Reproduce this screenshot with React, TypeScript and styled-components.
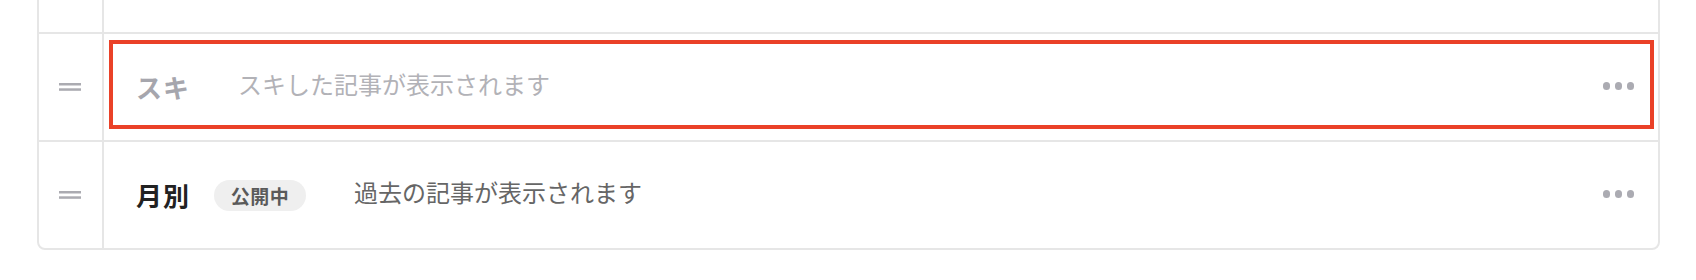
import styled, { createGlobalStyle } from "styled-components";

const GlobalStyle = createGlobalStyle`
  html, body {
    margin: 0;
    padding: 0;
    background: #ffffff;
  }
  body {
    font-family: "Noto Sans CJK JP", "Noto Sans", sans-serif;
  }
`;

type Item = {
  title: string;
  description: string;
  badge?: string;
  disabled?: boolean;
  highlighted?: boolean;
};

const items: Item[] = [
  {
    title: "スキ",
    description: "スキした記事が表示されます",
    disabled: true,
    highlighted: true,
  },
  {
    title: "月別",
    description: "過去の記事が表示されます",
    badge: "公開中",
  },
];

const DragHandle = () => (
  <svg width="22" height="8" viewBox="0 0 22 8" aria-hidden="true">
    <rect x="0" y="0" width="22" height="2.5" fill="#ababb1" />
    <rect x="0" y="5.3" width="22" height="2.5" fill="#ababb1" />
  </svg>
);

const App = () => {
  return (
    <>
      <GlobalStyle />
      <Page>
        <List>
          <Row $first>
            <HandleCell />
            <ContentCell />
          </Row>
          {items.map((item) => (
            <Row key={item.title}>
              <HandleCell>
                <DragHandle />
              </HandleCell>
              <ContentCell $highlighted={item.highlighted}>
                <Title $disabled={item.disabled}>{item.title}</Title>
                {item.badge && <Badge>{item.badge}</Badge>}
                <Description $disabled={item.disabled}>
                  {item.description}
                </Description>
                <MoreButton aria-label="more">
                  <Dot />
                  <Dot />
                  <Dot />
                </MoreButton>
              </ContentCell>
            </Row>
          ))}
        </List>
      </Page>
    </>
  );
};

export default App;

const Page = styled.div`
  display: flow-root;
  width: 100%;
  height: 280px;
  overflow: hidden;
  padding: 0 36px 0 37px;
  box-sizing: border-box;
`;

const List = styled.div`
  margin-top: -76px;
  border: 2px solid #e6e6e6;
  border-radius: 8px;
  background: #ffffff;
`;

const Row = styled.div<{ $first?: boolean }>`
  display: flex;
  height: 106px;
  border-top: ${({ $first }) => ($first ? "none" : "2px solid #e6e6e6")};
`;

const HandleCell = styled.div`
  width: 63px;
  flex-shrink: 0;
  display: flex;
  align-items: center;
  justify-content: center;
  border-right: 2px solid #e6e6e6;

  svg {
    display: block;
    margin-left: -1px;
    margin-top: -1px;
  }
`;

const ContentCell = styled.div<{ $highlighted?: boolean }>`
  position: relative;
  flex: 1;
  display: flex;
  align-items: center;
  padding: 0 24px 0 32px;

  ${({ $highlighted }) =>
    $highlighted &&
    `
    &::after {
      content: "";
      position: absolute;
      top: 6px;
      left: 5px;
      right: 4px;
      bottom: 11px;
      border: 4px solid #ea4128;
      pointer-events: none;
    }
  `}
`;

const Title = styled.span<{ $disabled?: boolean }>`
  font-size: 26px;
  font-weight: 700;
  letter-spacing: 1px;
  line-height: 1;
  color: ${({ $disabled }) => ($disabled ? "#a6a6ad" : "#222222")};
  margin-right: 24px;
  margin-bottom: 1px;
`;

const Badge = styled.span`
  display: inline-flex;
  align-items: center;
  justify-content: center;
  height: 31px;
  width: 92px;
  border-radius: 16px;
  background: #efefef;
  color: #5a5a5a;
  font-size: 19px;
  font-weight: 700;
  letter-spacing: 0.5px;
  margin-right: 24px;
`;

const Description = styled.span<{ $disabled?: boolean }>`
  flex: 1;
  font-size: 24px;
  line-height: 1;
  color: ${({ $disabled }) => ($disabled ? "#b2b2b7" : "#666666")};
  margin-left: 24px;
  margin-bottom: 6px;
`;

const MoreButton = styled.div`
  display: flex;
  align-items: center;
  gap: 4.5px;
  margin-top: -2px;
`;

const Dot = styled.span`
  width: 7.5px;
  height: 7.5px;
  border-radius: 50%;
  background: #ababb2;
`;
